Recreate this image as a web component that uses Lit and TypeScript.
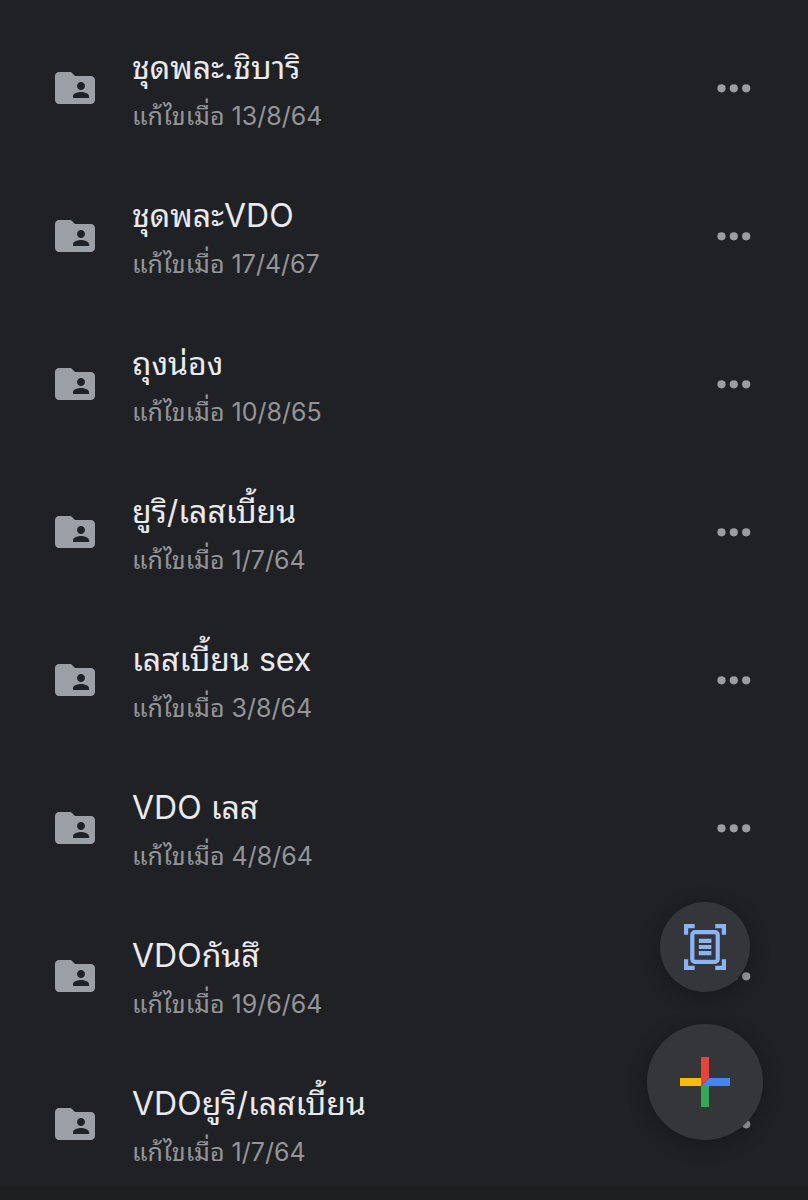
import { LitElement, html, css } from "lit";
import { customElement, property } from "lit/decorators.js";

interface Folder {
  name: string;
  modified: string;
}

const folders: Folder[] = [
  { name: "ชุดพละ.ชิบาริ", modified: "13/8/64" },
  { name: "ชุดพละVDO", modified: "17/4/67" },
  { name: "ถุงน่อง", modified: "10/8/65" },
  { name: "ยูริ/เลสเบี้ยน", modified: "1/7/64" },
  { name: "เลสเบี้ยน sex", modified: "3/8/64" },
  { name: "VDO เลส", modified: "4/8/64" },
  { name: "VDOกันสึ", modified: "19/6/64" },
  { name: "VDOยูริ/เลสเบี้ยน", modified: "1/7/64" },
];

@customElement("folder-row")
export class FolderRow extends LitElement {
  @property() name = "";
  @property() modified = "";

  static styles = css`
    :host {
      display: flex;
      align-items: center;
      height: 148px;
      padding: 0 49px 0 51px;
    }
    .folder {
      flex: none;
      width: 48px;
      height: 48px;
      fill: #9aa0a6;
    }
    .text {
      flex: 1;
      min-width: 0;
      padding: 4px 0 0 33px;
      white-space: nowrap;
    }
    .name,
    .date {
      margin: 0;
      font-weight: 400;
      overflow-x: clip;
      text-overflow: ellipsis;
    }
    .name {
      font-size: 32px;
      line-height: 52px;
      color: #e8eaed;
    }
    .date {
      font-size: 25px;
      line-height: 44px;
      color: #939599;
    }
    .more {
      flex: none;
      display: flex;
      padding: 20px 8px;
      border: 0;
      background: none;
      cursor: pointer;
    }
    .more svg {
      width: 34px;
      height: 10px;
      fill: #9b9da0;
    }
  `;

  render() {
    return html`
      <svg class="folder" viewBox="0 0 24 24" aria-hidden="true">
        <path
          d="M20 6h-8l-2-2H4c-1.1 0-1.99.9-1.99 2L2 18c0 1.1.9 2 2 2h16c1.1 0 2-.9 2-2V8c0-1.1-.9-2-2-2zm-5 3c1.1 0 2 .9 2 2s-.9 2-2 2-2-.9-2-2 .9-2 2-2zm4 8h-8v-1c0-1.33 2.67-2 4-2s4 .67 4 2v1z"
        />
      </svg>
      <div class="text">
        <h2 class="name">${this.name}</h2>
        <p class="date">แก้ไขเมื่อ ${this.modified}</p>
      </div>
      <button class="more" type="button" aria-haspopup="menu" aria-label=${this.name}>
        <svg viewBox="0 0 34 10" aria-hidden="true">
          <circle cx="4.5" cy="5.3" r="4.1" />
          <circle cx="16.8" cy="5.3" r="4.1" />
          <circle cx="29.2" cy="5.3" r="4.1" />
        </svg>
      </button>
    `;
  }
}

@customElement("app-root")
export class AppRoot extends LitElement {
  static styles = css`
    :host {
      display: block;
      box-sizing: border-box;
      min-height: 100vh;
      padding-top: 14px;
      background: #202125;
      font-family: Inter, "Noto Sans Thai Looped", "Noto Looped Thai", "IBM Plex Sans Thai Looped", Sarabun, Loma,
        Garuda, Waree, Laksaman, Umpush, "Noto Sans Thai", sans-serif;
    }
    .list {
      margin: 0;
      padding: 0;
      list-style: none;
    }
    .edge {
      position: fixed;
      inset: auto 0 0 0;
      height: 15px;
      background: #1e1f21;
    }
    .actions {
      position: fixed;
      right: 45px;
      bottom: 60px;
      display: flex;
      flex-direction: column;
      align-items: center;
      gap: 32px;
    }
    .fab {
      display: grid;
      place-items: center;
      padding: 0;
      border: 0;
      border-radius: 50%;
      background: #35363a;
      box-shadow: 0 4px 20px rgba(0, 0, 0, 0.3);
      cursor: pointer;
    }
    .scan {
      width: 90px;
      height: 90px;
    }
    .scan svg {
      width: 42px;
      height: 46px;
    }
    .create {
      width: 116px;
      height: 116px;
    }
    .create svg {
      width: 50px;
      height: 50px;
    }
  `;

  render() {
    return html`
      <main>
        <ul class="list">
          ${folders.map(
            (f) => html`<li><folder-row .name=${f.name} .modified=${f.modified}></folder-row></li>`
          )}
        </ul>
      </main>
      <div class="edge"></div>
      <div class="actions">
        <button class="fab scan" type="button" aria-label="สแกน">
          <svg viewBox="0 0 42 46" fill="none" stroke="#8ab4f8" stroke-width="4.2" aria-hidden="true">
            <path d="M2.1 10.8V2.1h8.6M31.3 2.1h8.6v8.7M39.9 35.2v8.7h-8.6M10.7 43.9H2.1v-8.7" />
            <rect x="8.3" y="8.1" width="25.4" height="29.8" rx="2.6" />
            <path d="M14.8 16.8h12.6M14.8 23h12.6M14.8 29.2h12.6" />
          </svg>
        </button>
        <button class="fab create" type="button" aria-label="ใหม่">
          <svg viewBox="0 0 50 50" aria-hidden="true">
            <path fill="#fbbc04" d="M0 21h21v8H0z" />
            <path fill="#34a853" d="M21 29h8v21h-8z" />
            <path fill="#4285f4" d="M29 21h21v8H21z" />
            <path fill="#ea4335" d="M21 0h8v21l-8 8z" />
          </svg>
        </button>
      </div>
    `;
  }
}
